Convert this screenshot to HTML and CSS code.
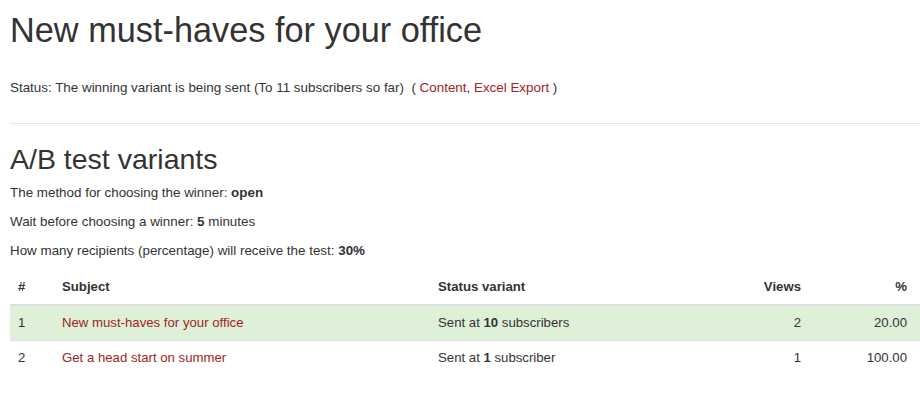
FILE: index.html
```html
<!DOCTYPE html>
<html lang="en">
<head>
    <meta charset="UTF-8">
    <meta name="viewport" content="width=device-width, initial-scale=1.0">
    <title>New must-haves for your office</title>
    <link rel="stylesheet" href="styles.css">
</head>
<body>
    <div class="container">
        <h1>New must-haves for your office</h1>
        <p class="status">Status: The winning variant is being sent (To 11 subscribers so far) &nbsp;( <a href="#">Content</a>, <a href="#">Excel Export</a> )</p>

        <hr>

        <!-- A/B test settings -->
        <h2>A/B test variants</h2>
        <p>The method for choosing the winner: <b>open</b></p>
        <p>Wait before choosing a winner: <b>5</b> minutes</p>
        <p class="last">How many recipients (percentage) will receive the test: <b>30%</b></p>

        <!-- Variants -->
        <table class="variants">
            <thead>
                <tr>
                    <th class="col-num">#</th>
                    <th class="col-subject">Subject</th>
                    <th class="col-status">Status variant</th>
                    <th class="col-views num">Views</th>
                    <th class="col-pct num">%</th>
                </tr>
            </thead>
            <tbody>
                <tr class="winner">
                    <td>1</td>
                    <td><a href="#">New must-haves for your office</a></td>
                    <td>Sent at <b>10</b> subscribers</td>
                    <td class="num">2</td>
                    <td class="num">20.00</td>
                </tr>
                <tr>
                    <td>2</td>
                    <td><a href="#">Get a head start on summer</a></td>
                    <td>Sent at <b>1</b> subscriber</td>
                    <td class="num">1</td>
                    <td class="num">100.00</td>
                </tr>
            </tbody>
        </table>
    </div>
</body>
</html>
```

FILE: styles.css
```css
body {
    margin: 0;
    font-family: "Liberation Sans", Arial, sans-serif;
    font-size: 13.4px;
    line-height: 1.42857;
    color: #333;
    background: #fff;
}
.container {
    padding: 0 0 0 10px;
}
h1 {
    font-size: 34.3px;
    font-weight: normal;
    line-height: 1.1;
    margin: 12px 0 28px;
}
h2 {
    font-size: 28.5px;
    font-weight: normal;
    line-height: 1.1;
    margin: 0 0 8px;
}
p {
    margin: 0 0 10px;
}
p.last {
    margin-bottom: 9px;
}
.status {
    margin: 0;
}
a {
    color: #a32222;
    text-decoration: none;
}
hr {
    border: 0;
    border-top: 1px solid #e5e5e5;
    margin: 26px 0 20px;
}
.variants {
    width: 910px;
    font-size: 13.2px;
    line-height: 18px;
    border-collapse: collapse;
    border-spacing: 0;
}
.variants th,
.variants td {
    padding: 8px;
    text-align: left;
    vertical-align: top;
    border-top: 1px solid #ddd;
}
.variants th {
    border-top: 0;
    border-bottom: 2px solid #ddd;
    font-weight: bold;
}
.variants .num {
    text-align: right;
}
.variants th:last-child,
.variants td:last-child {
    padding-right: 13px;
}
.col-num { width: 28px; }
.col-subject { width: 360px; }
.col-status { width: 234px; }
.col-views { width: 113px; }
.winner td {
    background: #dff0d8;
}
```
